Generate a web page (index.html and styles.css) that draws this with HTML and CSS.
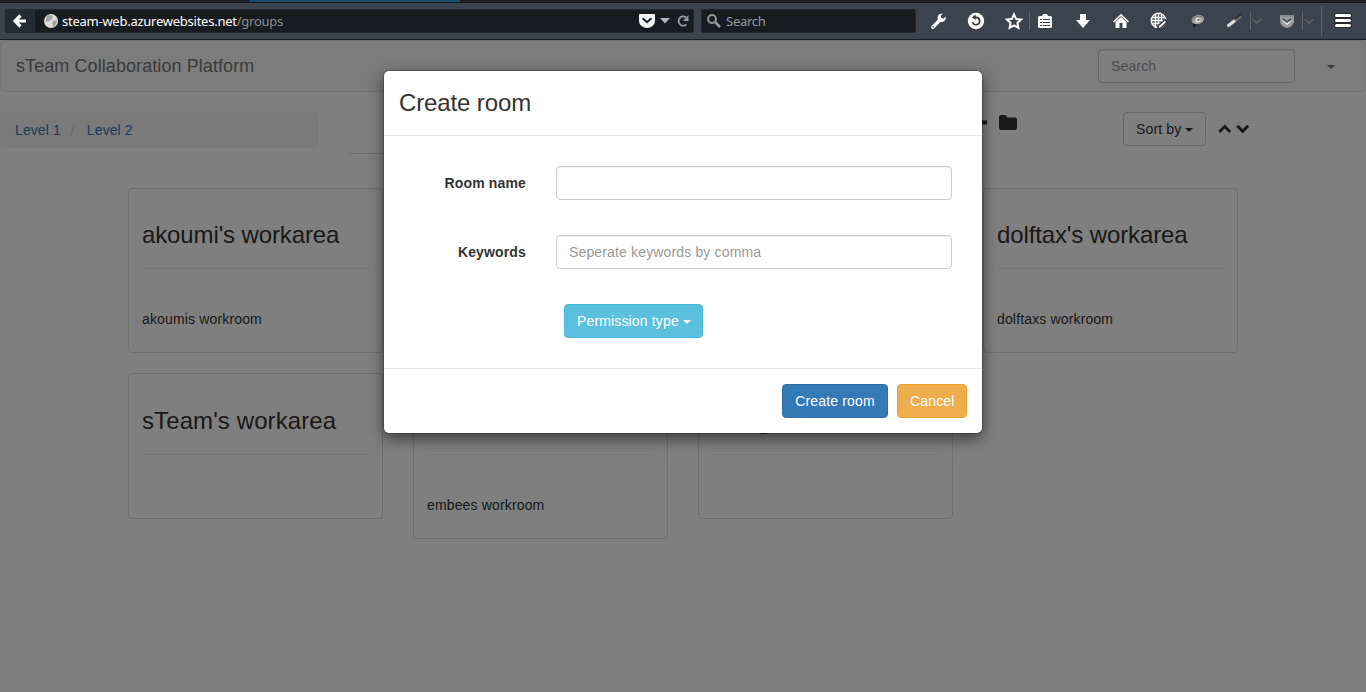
FILE: index.html
```
<!DOCTYPE html>
<html lang="en">
<head>
<meta charset="utf-8">
<title>sTeam Collaboration Platform</title>
<link rel="stylesheet" href="styles.css">
</head>
<body>
<header class="browser">
  <div class="tabstrip"><span class="active-tab"></span></div>
  <div class="toolbar">
    <div class="urlbar">
      <div class="back"><svg width="14" height="14" viewBox="0 0 14 14"><path d="M7.500 1.500 2 7l5.500 5.500M2.500 7H13" fill="none" stroke="#fff" stroke-width="3.200"/></svg></div>
      <svg class="globe" width="14" height="14" viewBox="0 0 14 14"><circle cx="7" cy="7" r="7" fill="#dcdcdc"/><path d="M2 3 5 1l4 1-1 3-3 2-3 1zM9 7l4-1-1 4-2 3-2-3z" fill="#a2a2a2"/></svg>
      <span class="url"><b>steam-web.azurewebsites.net</b>/groups</span>
      <svg class="pocket" width="16" height="14" viewBox="0 0 16 14"><path d="M1 0h14q1 0 1 1v6q0 3-2.500 5T8 14t-5.500-2T0 7V1q0-1 1-1z" fill="#f5f5f5"/><path d="m4.200 4.800 3.800 3.400 3.800-3.400" fill="none" stroke="#181b20" stroke-width="2" stroke-linecap="round"/></svg>
      <svg class="drop" width="10" height="6" viewBox="0 0 10 6"><path d="M0 0h10L5 5.500z" fill="#b3b8bd"/></svg>
      <svg class="reload" width="12" height="12" viewBox="0 0 12 12"><path d="M9.300 9.600A4.600 4.600 0 1 1 9 2.400" fill="none" stroke="#8f9ba6" stroke-width="2"/><path d="M11.500 0v6H5.800z" fill="#8f9ba6"/></svg>
    </div>
    <div class="searchbar">
      <svg width="14" height="14" viewBox="0 0 14 14"><circle cx="5" cy="5" r="3.900" fill="none" stroke="#999" stroke-width="2"/><path d="m8 8 5 5" stroke="#999" stroke-width="2.500"/></svg>
      <span>Search</span>
    </div>
    <div class="tools">
      <svg width="1366" height="36" viewBox="0 3 1366 36">
        <g transform="translate(931 13)"><path d="M1.800 14.200 8.200 7.800" stroke="#fff" stroke-width="3.400" stroke-linecap="round"/><path d="M11.800.5 9.700 3l.6 2 2.200.6L14.700 3.600q.6 2.800-1.300 4.400-1.900 1.500-4.400.7L6.700 6.600Q6 3.800 7.500 2 9.200.1 11.800.5z" fill="#fff"/><circle cx="2.200" cy="13.700" r=".8" fill="#3b434f"/></g>
        <g transform="translate(968 13)"><circle cx="8" cy="8" r="8.200" fill="#fff"/><path d="M4.500 9.300a3.700 3.700 0 1 0 3.500-5H6.500" fill="none" stroke="#333a45" stroke-width="1.700"/><path d="M7.600 1.500v5.600L4 4.300z" fill="#333a45"/></g>
        <path d="m1014 14.300 2.100 4.600 5 .6-3.700 3.400 1 5-4.400-2.500-4.400 2.500 1-5-3.700-3.400 5-.6z" fill="none" stroke="#fff" stroke-width="2"/>
        <path d="M1029.500 12v18" stroke="#5c646f"/>
        <g transform="translate(1038 13)"><path d="M1.500 3H4l1-2h4l1 2h2.500Q14 3 14 4.500v9q0 1.500-1.500 1.500h-11Q0 15 0 13.500v-9Q0 3 1.500 3z" fill="#fff"/><path d="M2 6.500h2m1 0h7M2 9.500h2m1 0h7M2 12.500h2m1 0h7" stroke="#333a45" stroke-width="1"/></g>
        <path d="M1080 14h6v6h4l-7 8-7-8h4z" fill="#fff"/>
        <path d="m1113.500 22 7.500-7 7.500 7" fill="none" stroke="#fff" stroke-width="1.700"/><path d="m1115.500 22 5.500-5 5.500 5v6h-4v-5h-3v5h-4z" fill="#fff"/>
        <g fill="none" stroke="#fff" stroke-width="1.400"><circle cx="1158.500" cy="20.500" r="7.200"/><path d="M1155.500 14v14m3-15v15m3-14v14M1152 17.500h13m-14 3h15m-14 3h13"/></g>
        <path d="m1165 19.500-6.500 6-1 3.500 3.500-1 6-6z" fill="#fff" stroke="#303742" stroke-width="1.400"/>
        <g transform="rotate(-15 1198 20)"><ellipse cx="1198" cy="19.500" rx="6.300" ry="4.500" fill="#a5a6a6"/><path d="M1192 19q6-5 12 0" fill="none" stroke="#777" stroke-width="1.300"/><circle cx="1198" cy="20" r="2.500" fill="#ddd"/><circle cx="1198.500" cy="20" r="1" fill="#444"/><path d="m1192 22.500 0 4.500 4-3z" fill="#17191c"/></g>
        <path d="m1228.500 25.500 6.500-5" stroke="#e0e0dc" stroke-width="3" stroke-linecap="round"/><path d="m1235 20.500 6-4.500" stroke="#747474" stroke-width="3.400"/><path d="m1235 19 6-4.500" stroke="#2b2424" stroke-width="1.300"/>
        <path d="M1250.500 12v18m52-18v18" stroke="#5c646f"/><path d="m1252.500 19 4.500 4 4.500-4m43 0 4.500 4 4.500-4" fill="none" stroke="#5b5d60" stroke-width="1.900"/>
        <path d="M1281 15h12q1 0 1 1v5q0 3-2.500 5t-4.500 2-4.500-2-2.500-5v-5q0-1 1-1z" fill="#999b9d"/><path d="M1281 16h12" stroke="#777"/><path d="m1283 20 4 3.500 4-3.500" fill="none" stroke="#ddd" stroke-width="2.600"/><path d="m1283 19 4 3 4-3" fill="none" stroke="#4a4d51" stroke-width="1.600"/>
        <path d="M1321.500 6v30" stroke="#59616c"/>
        <path d="M1336.500 15.500h13m-13 5h13m-13 5h13" stroke="#232931" stroke-width="5" stroke-linecap="round"/><path d="M1336.500 15.500h13m-13 5h13m-13 5h13" stroke="#fff" stroke-width="3" stroke-linecap="round"/>
      </svg>
    </div>
  </div>
</header>
<main class="viewport">
  <nav class="navbar">
    <span class="brand">sTeam Collaboration Platform</span>
    <input class="control nav-search" placeholder="Search">
    <span class="caret"></span>
  </nav>
  <div class="controls">
    <ol class="breadcrumb"><li>Level 1</li><li>Level 2</li></ol>
    <div class="tabline"></div>
    <div class="actions">
      <svg width="14" height="14" viewBox="0 0 14 14"><path d="M7 1v12M0 7.500h14" stroke="#333" stroke-width="4"/></svg>
      <svg class="folder" width="18" height="15" viewBox="0 0 18 15"><path d="M2 0h4q2 0 2 2.500h8q2 0 2 2V13q0 2-2 2H2q-2 0-2-2V2q0-2 2-2z" fill="#333"/></svg>
    </div>
    <button class="btn btn-default">Sort by <span class="caret"></span></button>
    <svg class="chevrons" width="32" height="10" viewBox="0 0 32 10"><path d="m1.200 8 5.500-5.500 5.500 5.500M19.200 1.800l5.500 5.500 5.500-5.500" fill="none" stroke="#333" stroke-width="3"/></svg>
  </div>
  <section class="cards">
    <article class="card"><h3>akoumi's workarea</h3><hr><p>akoumis workroom</p></article>
    <article class="card"></article>
    <article class="card"></article>
    <article class="card"><h3>dolftax's workarea</h3><hr><p>dolftaxs workroom</p></article>
    <article class="card"><h3 class="wide">sTeam's workarea</h3><hr><p></p></article>
    <article class="card"><h3>embee's workarea</h3><hr><p>embees workroom</p></article>
    <article class="card"><h3>being's workarea</h3><hr><p></p></article>
  </section>
  <div class="backdrop">
    <div class="modal">
      <div class="modal-header"><h3>Create room</h3></div>
      <form class="modal-body">
        <label>Room name</label><input class="control">
        <label>Keywords</label><input class="control" placeholder="Seperate keywords by comma">
        <button type="button" class="btn btn-info">Permission type <span class="caret"></span></button>
      </form>
      <div class="modal-footer">
        <button class="btn btn-primary">Create room</button>
        <button class="btn btn-warning">Cancel</button>
      </div>
    </div>
  </div>
</main>
</body>
</html>
```
FILE: styles.css
```
* { box-sizing: border-box; }
body { margin: 0; height: 692px; overflow: hidden; color: #333; font: 14px/20px "Liberation Sans", Arial, sans-serif; letter-spacing: .15px; }
h3, p, ol { margin: 0; padding: 0; font-weight: normal; }
h3 { font-size: 24px; line-height: 26px; letter-spacing: -.12px; }
.wide { letter-spacing: .1px; }
svg { display: block; flex: none; }

.browser { height: 40px; background: #3b434f; border-bottom: 1px solid #1a1e24; font-family: "Noto Sans", sans-serif; font-size: 13px; letter-spacing: -.25px; }
.tabstrip { height: 3px; background: #1d2127; border-bottom: 1px solid #15191e; padding-left: 250px; }
.active-tab { display: block; width: 210px; height: 2px; background: #1b4c6b; }
.toolbar { position: relative; display: flex; gap: 7px; height: 36px; padding: 6px 5px; }
.urlbar, .searchbar { display: flex; align-items: center; height: 24px; background: #181b20; border: 1px solid #252a32; border-radius: 2px; }
.urlbar { width: 689px; }
.back { display: flex; align-items: center; width: 29px; height: 22px; padding-left: 7px; background: #252b34; }
.globe { margin-left: 9px; }
.url { flex: 1; margin-left: 4px; color: #8b8e92; }
.url b { font-weight: normal; color: #fff; }
.pocket { margin-right: 5px; }
.drop { margin-right: 7px; }
.reload { margin-right: 4px; }
.searchbar { width: 215px; padding-left: 5px; gap: 5px; color: #989a9d; }
.tools { position: absolute; left: 0; top: 0; }

.viewport { position: relative; height: 652px; background: #fff; }
.navbar { display: flex; align-items: center; height: 52px; padding: 0 30px 0 15px; background: #f8f8f8; border: 1px solid #e7e7e7; border-radius: 4px; }
.brand { flex: 1; font-size: 18px; color: #777; letter-spacing: .08px; }
.control { width: 100%; height: 34px; padding: 6px 12px; border: 1px solid #ccc; border-radius: 4px; background: #fff; font: inherit; letter-spacing: inherit; box-shadow: inset 0 1px 1px rgba(0, 0, 0, .075); }
.control::placeholder { color: #999; opacity: 1; }
.nav-search { width: 197px; margin-right: 32px; }
.caret { display: inline-block; border: 4px solid transparent; border-top-color: currentColor; border-bottom: 0; vertical-align: middle; }
.navbar .caret { margin-top: 1px; color: #777; }

.controls { display: flex; align-items: flex-start; height: 76px; margin-top: 20px; }
.breadcrumb { display: flex; width: 319px; height: 36px; padding: 8px 15px; background: #f5f5f5; border-radius: 4px; list-style: none; color: #337ab7; letter-spacing: .1px; }
.breadcrumb li + li::before { content: "/"; padding: 0 12px 0 10px; color: #ccc; }
.tabline { width: 500px; height: 42px; margin-left: 31px; border-bottom: 1px solid #ddd; }
.actions { display: flex; gap: 12px; width: 150px; margin-left: 123px; padding-top: 3px; }
.btn { height: 34px; padding: 6px 12px; border: 1px solid; border-radius: 4px; color: #fff; font: inherit; letter-spacing: inherit; white-space: nowrap; }
.btn-default { width: 83px; background: #fff; border-color: #ccc; color: #333; }
.chevrons { margin: 12px 0 0 12px; }

.cards { display: grid; grid-template-columns: repeat(4, 255px); grid-template-rows: 165px auto; gap: 20px 30px; align-items: start; padding-left: 128px; }
.card { min-height: 146px; padding: 33px 13px; border: 1px solid #ddd; border-radius: 4px; }
.card:nth-child(-n+4) { height: 165px; }
.card hr { margin: 20px 0 40px; border: 0; border-top: 1px solid #eee; }
.card:nth-child(n+5) { height: 146px; padding-top: 34px; }
.card:nth-child(6) { height: 166px; }

.backdrop { position: absolute; inset: 0; display: flex; justify-content: center; align-items: flex-start; padding-top: 30px; background: rgba(0, 0, 0, .5); }
.modal { width: 600px; background: #fff; background-clip: padding-box; border: 1px solid rgba(0, 0, 0, .2); border-radius: 6px; box-shadow: 0 5px 15px rgba(0, 0, 0, .5); }
.modal-header { height: 65px; padding: 19px 15px; border-bottom: 1px solid #e5e5e5; }
.modal-body { display: grid; grid-template-columns: 142px 396px; gap: 35px 30px; align-items: center; height: 232px; padding: 30px 0 30px; align-content: start; }
.modal-body label { font-weight: bold; text-align: right; }
.btn-info { grid-column: 2; justify-self: start; width: 139px; margin-left: 8px; background: #5bc0de; border-color: #46b8da; }
.modal-footer { display: flex; justify-content: flex-end; gap: 9px; height: 65px; padding: 15px; border-top: 1px solid #e5e5e5; }
.btn-primary { width: 106px; background: #337ab7; border-color: #2e6da4; }
.btn-warning { width: 70px; background: #f0ad4e; border-color: #eea236; }
```
